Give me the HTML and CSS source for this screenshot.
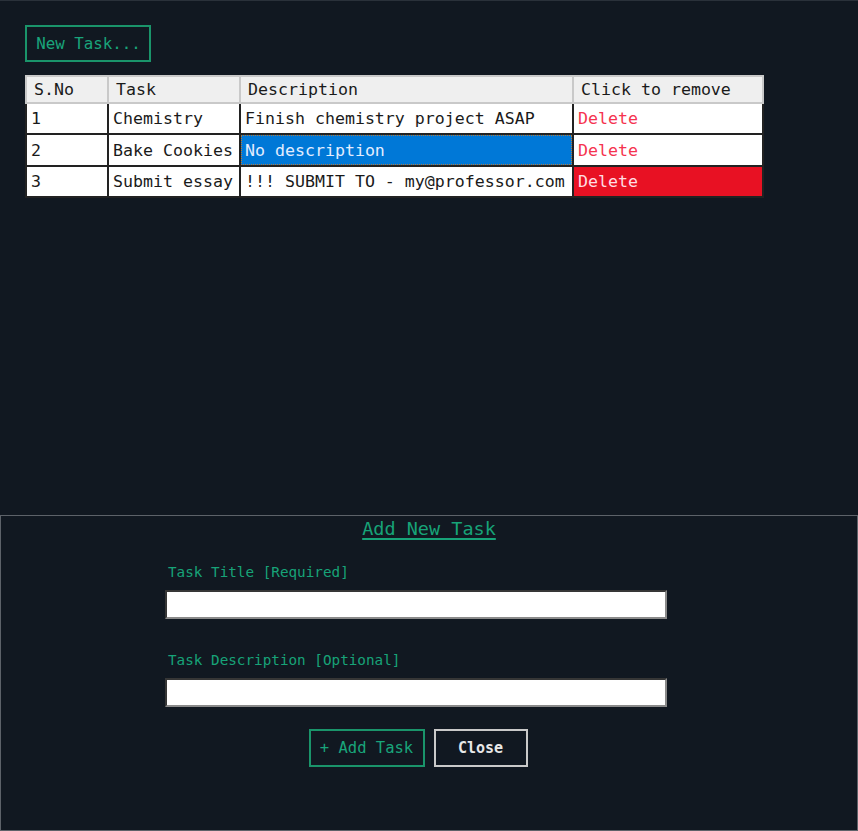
FILE: index.html
```html
<!DOCTYPE html>
<html>
<head>
<meta charset="utf-8">
<link rel="stylesheet" href="styles.css">
</head>
<body>
<main class="top">
  <button class="btn-new">New Task...</button>
  <table class="tasks">
    <thead>
      <tr><th class="c1">S.No</th><th class="c2">Task</th><th class="c3">Description</th><th class="c4">Click to remove</th></tr>
    </thead>
    <tbody>
      <tr><td>1</td><td>Chemistry</td><td>Finish chemistry project ASAP</td><td class="del">Delete</td></tr>
      <tr><td>2</td><td>Bake Cookies</td><td class="sel">No description</td><td class="del">Delete</td></tr>
      <tr><td>3</td><td>Submit essay</td><td>!!! SUBMIT TO - my@professor.com</td><td class="del hot">Delete</td></tr>
    </tbody>
  </table>
</main>
<section class="panel">
  <h2 class="panel-title">Add New Task</h2>
  <div class="form">
    <label class="lbl">Task Title [Required]</label>
    <input class="field" type="text">
    <label class="lbl lbl2">Task Description [Optional]</label>
    <input class="field" type="text">
    <div class="actions">
      <button class="btn-add">+ Add Task</button>
      <button class="btn-close">Close</button>
    </div>
  </div>
</section>
</body>
</html>
```
FILE: styles.css
```css
html, body {
  margin: 0;
  padding: 0;
  background: #111821;
  font-family: "DejaVu Sans Mono", "Liberation Mono", monospace;
}
body {
  width: 858px;
  height: 831px;
  overflow: hidden;
}
.top {
  box-sizing: border-box;
  height: 515px;
  padding: 25px 25px 0;
  border-top: 1px solid #2a313a;
}
.btn-new {
  display: block;
  box-sizing: border-box;
  width: 126px;
  height: 37px;
  margin: -1px 0 0 0;
  padding: 0 0 0 1px;
  background: transparent;
  border: 2px solid #1a946a;
  color: #19a57b;
  font-family: inherit;
  font-size: 15.8px;
}
.tasks {
  margin-top: 13px;
  border-collapse: collapse;
  table-layout: fixed;
  width: 739px;
  font-size: 16.6px;
  color: #1a1a1a;
  background: #fff;
}
.tasks th {
  background: #efefef;
  font-weight: normal;
  text-align: left;
  height: 25px;
  padding: 0 0 0 7px;
  border: 2px solid #c9c9c9;
  white-space: nowrap;
}
.c1 { width: 73px; }
.c2 { width: 123px; }
.c3 { width: 324px; }
.tasks td {
  height: 29.4px;
  padding: 0 0 0 4px;
  border: 2px solid #222;
  white-space: nowrap;
  overflow: hidden;
}
.tasks td.sel {
  background: #0078d7;
  color: #e3edff;
  outline: 1px dotted #b07a40;
  outline-offset: -2px;
}
.tasks td.del {
  color: #f5334f;
}
.tasks td.hot {
  background: #e81123;
  color: #ffdde2;
}
.panel {
  box-sizing: border-box;
  height: 316px;
  border: 1px solid #5d6269;
}
.panel-title {
  margin: 2px 0 0;
  text-align: center;
  font-weight: normal;
  font-size: 18.5px;
  line-height: 22px;
  color: #17a378;
  text-decoration: underline;
  text-decoration-thickness: 2px;
  text-underline-offset: 3px;
}
.form {
  margin-left: 164px;
  width: 502px;
  display: flex;
  flex-direction: column;
}
.lbl {
  margin: 23px 0 0 3px;
  font-size: 14.3px;
  line-height: 18px;
  color: #17a378;
}
.lbl2 { margin-top: 32px; }
.field {
  box-sizing: border-box;
  width: 502px;
  height: 29px;
  margin: 9px 0 0 0;
  background: #fff;
  border: 2px inset #8a8a8a;
}
.actions {
  display: flex;
  justify-content: center;
  gap: 9px;
  margin-top: 22px;
  padding-left: 4px;
}
.btn-add, .btn-close {
  box-sizing: border-box;
  height: 38px;
  background: transparent;
  font-family: inherit;
  font-size: 15.5px;
}
.btn-add {
  width: 116px;
  border: 2px solid #1a946a;
  color: #19a57b;
}
.btn-close {
  width: 94px;
  border: 2px solid #c9c9c9;
  color: #e8e8e8;
  font-weight: bold;
  font-size: 15px;
}
```
